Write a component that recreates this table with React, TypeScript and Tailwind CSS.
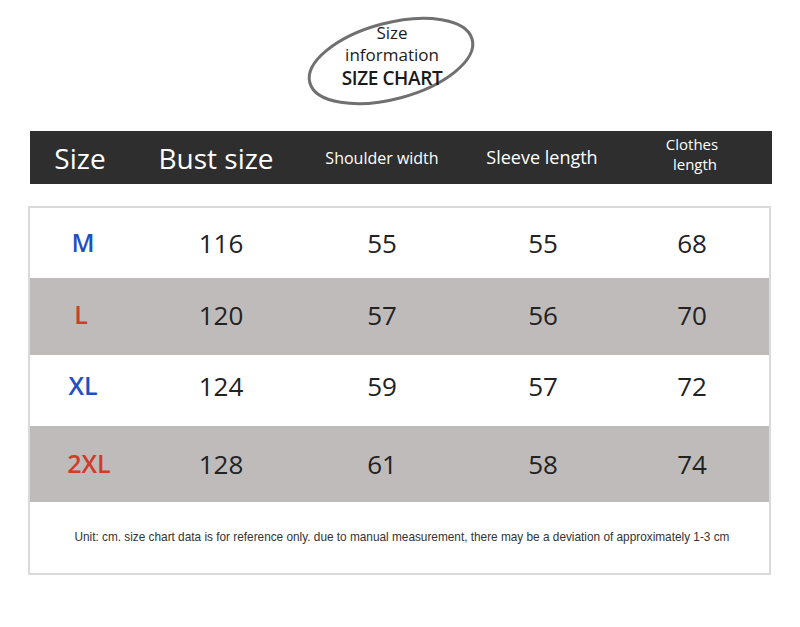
import React from "react";

const rows = [
  { size: "M", color: "text-[#1f4fc4]", bg: "bg-white", h: "h-[70px]", shift: "", lab: "", vals: ["116", "55", "55", "68"] },
  { size: "L", color: "text-[#d23b29]", bg: "bg-[#bfbbbb]", h: "h-[77px]", shift: "pb-[3px]", lab: "pr-[4px]", vals: ["120", "57", "56", "70"] },
  { size: "XL", color: "text-[#1f4fc4]", bg: "bg-white", h: "h-[71px]", shift: "pb-[9px]", lab: "", vals: ["124", "59", "57", "72"] },
  { size: "2XL", color: "text-[#d23b29]", bg: "bg-[#bfbbbb]", h: "h-[76px]", shift: "", lab: "pl-[12px]", vals: ["128", "61", "58", "74"] },
];

const App = () => {
  return (
    <div className="w-[800px] h-[627px] bg-white font-['Open_Sans',sans-serif] overflow-hidden">
      {/* title */}
      <div className="relative h-[131px]">
        <svg className="absolute left-[291px] top-[1px]" width="200" height="120" viewBox="0 0 200 120">
          <ellipse cx="100" cy="60" rx="84" ry="38" transform="rotate(-15 100 60)" fill="none" stroke="#707070" strokeWidth="3" />
        </svg>
        <div className="relative pt-[22px] text-center text-[17px] leading-[22px] text-[#1a1a1a] pr-[16px]">
          <div>Size</div>
          <div>information</div>
          <div className="font-semibold text-[19px] leading-[24px] tracking-[-0.4px]">SIZE CHART</div>
        </div>
      </div>

      {/* header */}
      <div className="ml-[30px] w-[742px] h-[53px] bg-[#2e2e2e] text-white grid grid-cols-[100px_172px_160px_160px_140px] items-center text-center">
        <div className="text-[28px]">Size</div>
        <div className="text-[28px]">Bust size</div>
        <div className="text-[16px]">Shoulder width</div>
        <div className="text-[18px]">Sleeve length</div>
        <div className="text-[15px] leading-[20px] -mt-[8px]">
          <div>Clothes</div>
          <div className="pl-[6px]">length</div>
        </div>
      </div>

      {/* table */}
      <div className="mt-[22px] ml-[28px] w-[743px] border-2 border-[#dadada]">
        {rows.map((r) => (
          <div key={r.size} className={`${r.bg} ${r.h} ${r.shift} grid grid-cols-[106px_170px_152px_170px_128px] items-center text-center`}>
            <div className={`${r.color} ${r.lab} text-[25px] font-semibold`}>{r.size}</div>
            {r.vals.map((v, i) => (
              <div key={i} className="text-[26px] text-[#222]">{v}</div>
            ))}
          </div>
        ))}
        <div className="h-[71px] flex items-center justify-center">
          <p className="font-['Liberation_Sans',sans-serif] text-[13.5px] text-[#333] whitespace-nowrap scale-x-[0.875] pl-[6px]">
            Unit: cm. size chart data is for reference only. due to manual measurement, there may be a deviation of approximately 1-3 cm
          </p>
        </div>
      </div>
    </div>
  );
};

export default App;
